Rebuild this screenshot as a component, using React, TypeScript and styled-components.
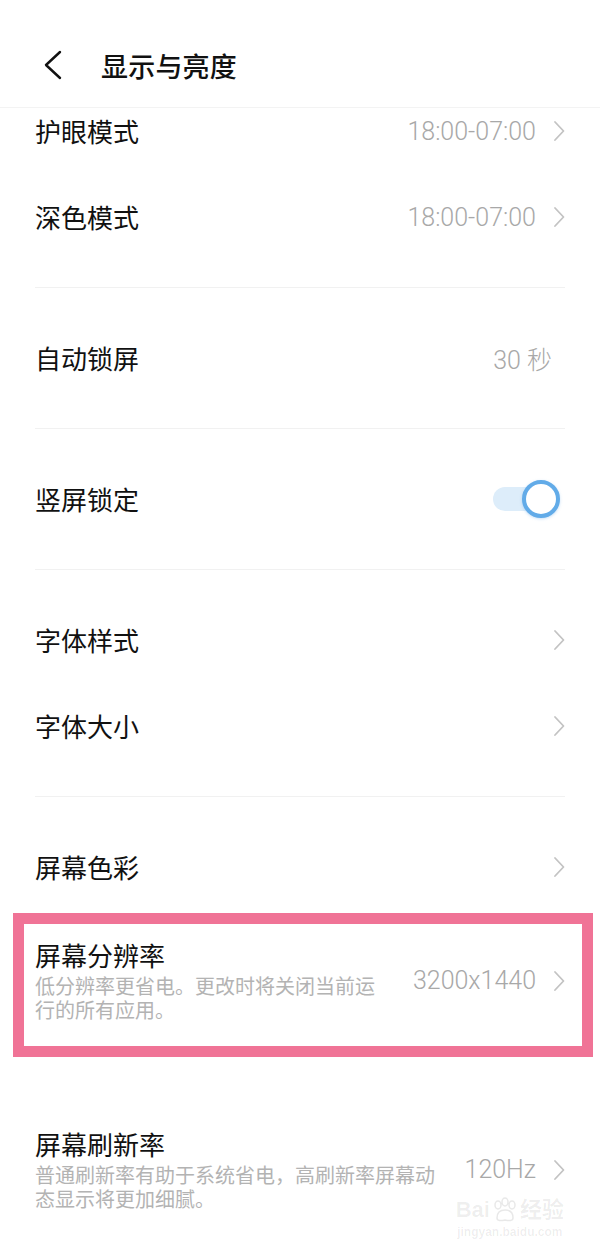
import React from "react";
import styled, { createGlobalStyle } from "styled-components";

const GlobalStyle = createGlobalStyle`
  html, body {
    margin: 0;
    padding: 0;
    background: #ffffff;
  }
  body {
    font-family: "Noto Sans CJK SC", "Noto Sans", sans-serif;
    -webkit-font-smoothing: antialiased;
  }
`;

const Screen = styled.div`
  position: relative;
  width: 600px;
  height: 1243px;
  overflow: hidden;
  background: #ffffff;
`;

const Header = styled.header`
  height: 108px;
  display: flex;
  align-items: center;
  padding-left: 40px;
  padding-top: 23px;
  box-sizing: border-box;
  border-bottom: 1px solid #f3f3f3;
`;

const BackButton = styled.button`
  display: flex;
  align-items: center;
  justify-content: center;
  width: 24px;
  height: 32px;
  padding: 0;
  border: none;
  background: none;
  margin-right: 37px;
`;

const Title = styled.h1`
  margin: 0;
  font-size: 27px;
  font-weight: 500;
  color: #111111;
  letter-spacing: 0.2px;
`;

const Row = styled.div<{ $cut?: boolean }>`
  display: flex;
  align-items: center;
  height: ${(p) => (p.$cut ? 66 : 86)}px;
  padding: 0 35px ${(p) => (p.$cut ? 20 : 0)}px 35px;
  box-sizing: border-box;
`;

const Label = styled.div`
  flex: 1;
  font-size: 26px;
  line-height: 32px;
  color: #111111;
`;

const Value = styled.span<{ $gap?: number }>`
  font-family: "Roboto", "Noto Sans CJK SC", sans-serif;
  font-weight: 300;
  font-size: 25px;
  color: #a8a8a8;
  margin-right: ${(p) => p.$gap ?? 17}px;
  white-space: nowrap;
`;

const Section = styled.div`
  height: 55px;
  display: flex;
  align-items: center;
  padding: 0 35px;
  box-sizing: border-box;
`;

const Divider = styled.div`
  flex: 1;
  height: 1px;
  background: #f1f1f1;
`;

const Toggle = styled.div`
  position: relative;
  width: 67px;
  height: 38px;
  margin-right: 5px;
`;

const ToggleTrack = styled.div`
  position: absolute;
  left: 0;
  top: 7px;
  width: 56px;
  height: 24px;
  border-radius: 12px;
  background: #ddedfa;
`;

const ToggleKnob = styled.div`
  position: absolute;
  right: 0;
  top: 0;
  width: 38px;
  height: 38px;
  box-sizing: border-box;
  border-radius: 50%;
  border: 4px solid #62abe8;
  background: #ffffff;
  box-shadow: 0 1px 3px rgba(90, 160, 230, 0.35);
`;

const Highlight = styled.div`
  margin: 3px 7px 0 13px;
  border: 11px solid #f07396;
`;

const DetailRow = styled.div<{ $top: number; $bottom: number; $sideLeft: number; $sideRight: number }>`
  display: flex;
  align-items: center;
  padding: ${(p) => p.$top}px ${(p) => p.$sideRight}px ${(p) => p.$bottom}px ${(p) => p.$sideLeft}px;
`;

const TextBlock = styled.div`
  flex: 1;
  display: flex;
  flex-direction: column;
`;

const Sub = styled.div`
  margin-top: 3px;
  font-size: 20px;
  line-height: 24px;
  color: #b3b3b3;
`;

const Watermark = styled.div`
  position: absolute;
  right: 36px;
  bottom: 4px;
  display: flex;
  flex-direction: column;
  align-items: center;
  color: rgba(0, 0, 0, 0.07);
  font-family: "Liberation Sans", "Noto Sans CJK SC", sans-serif;
  pointer-events: none;
`;

const WatermarkLogo = styled.div`
  display: flex;
  align-items: center;
  font-size: 22px;
  font-weight: 700;
  line-height: 24px;
  gap: 2px;
`;

const WatermarkUrl = styled.div`
  font-size: 12px;
  font-weight: 700;
  margin-top: 2px;
`;

const Chevron = () => (
  <svg width="12" height="22" viewBox="0 0 12 22" fill="none">
    <path d="M2 2 L10.5 11 L2 20" stroke="#c3c3c3" strokeWidth="1.8" strokeLinecap="round" strokeLinejoin="round" />
  </svg>
);

const BackIcon = () => (
  <svg width="22" height="30" viewBox="0 0 22 30" fill="none">
    <path d="M19 2 L5 15 L19 28" stroke="#111" strokeWidth="2.4" strokeLinecap="round" strokeLinejoin="round" />
  </svg>
);

const Paw = () => (
  <svg width="26" height="26" viewBox="0 0 26 26" fill="none" stroke="rgba(0,0,0,0.09)" strokeWidth="1.5">
    <ellipse cx="6" cy="8" rx="3" ry="4" />
    <ellipse cx="13" cy="5" rx="3" ry="4" />
    <ellipse cx="20" cy="8" rx="3" ry="4" />
    <path d="M5 21 C5 15 9 13 13 13 C17 13 21 15 21 21 C21 24 17 24 13 23 C9 24 5 24 5 21 Z" />
  </svg>
);

type Item =
  | { kind: "nav"; label: string; value?: string; cut?: boolean }
  | { kind: "plain"; label: string; value: string }
  | { kind: "toggle"; label: string }
  | { kind: "divider" };

const items: Item[] = [
  { kind: "nav", label: "护眼模式", value: "18:00-07:00", cut: true },
  { kind: "nav", label: "深色模式", value: "18:00-07:00" },
  { kind: "divider" },
  { kind: "plain", label: "自动锁屏", value: "30 秒" },
  { kind: "divider" },
  { kind: "toggle", label: "竖屏锁定" },
  { kind: "divider" },
  { kind: "nav", label: "字体样式" },
  { kind: "nav", label: "字体大小" },
  { kind: "divider" },
  { kind: "nav", label: "屏幕色彩" },
];

export default function App() {
  return (
    <>
      <GlobalStyle />
      <Screen>
        <Header>
          <BackButton aria-label="返回">
            <BackIcon />
          </BackButton>
          <Title>显示与亮度</Title>
        </Header>

        {items.map((it, i) => {
          if (it.kind === "divider") {
            return (
              <Section key={i}>
                <Divider />
              </Section>
            );
          }
          if (it.kind === "toggle") {
            return (
              <Row key={i}>
                <Label>{it.label}</Label>
                <Toggle>
                  <ToggleTrack />
                  <ToggleKnob />
                </Toggle>
              </Row>
            );
          }
          if (it.kind === "plain") {
            return (
              <Row key={i}>
                <Label>{it.label}</Label>
                <Value $gap={13}>{it.value}</Value>
              </Row>
            );
          }
          return (
            <Row key={i} $cut={it.cut}>
              <Label>{it.label}</Label>
              {it.value && <Value>{it.value}</Value>}
              <Chevron />
            </Row>
          );
        })}

        <Highlight>
          <DetailRow $top={15} $bottom={24} $sideLeft={11} $sideRight={17}>
            <TextBlock>
              <Label>屏幕分辨率</Label>
              <Sub>
                低分辨率更省电。更改时将关闭当前运
                <br />
                行的所有应用。
              </Sub>
            </TextBlock>
            <Value>3200x1440</Value>
            <Chevron />
          </DetailRow>
        </Highlight>

        <DetailRow $top={71} $bottom={20} $sideLeft={35} $sideRight={35}>
          <TextBlock>
            <Label>屏幕刷新率</Label>
            <Sub>
              普通刷新率有助于系统省电，高刷新率屏幕动
              <br />
              态显示将更加细腻。
            </Sub>
          </TextBlock>
          <Value>120Hz</Value>
          <Chevron />
        </DetailRow>

        <Watermark>
          <WatermarkLogo>
            <span>Bai</span>
            <Paw />
            <span>经验</span>
          </WatermarkLogo>
          <WatermarkUrl>jingyan.baidu.com</WatermarkUrl>
        </Watermark>
      </Screen>
    </>
  );
}
